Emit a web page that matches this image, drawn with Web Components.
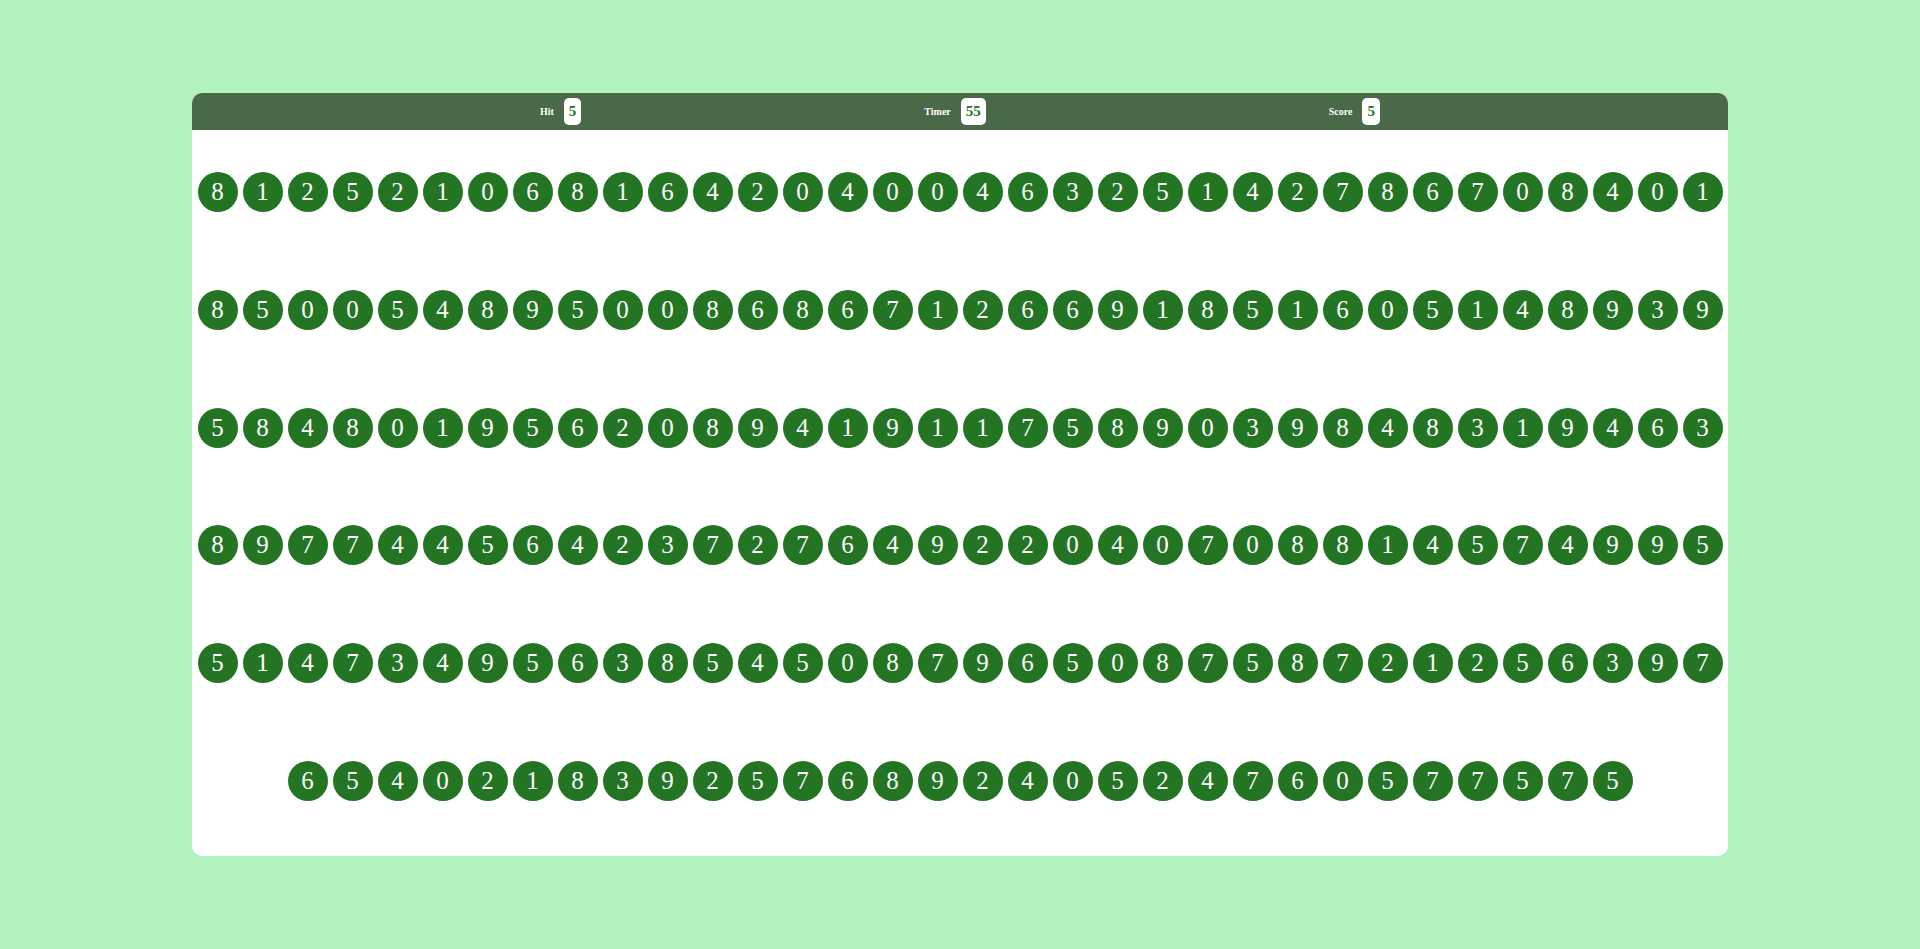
<!DOCTYPE html>
<html lang="en">
<head>
<meta charset="utf-8">
<title>Bubble Game</title>
<style>
body { margin: 0; font-family: "Liberation Serif", "Times New Roman", serif; }
</style>
</head>
<body>
<bubble-game>
  <score-bar slot="bar">
    <stat-box label="Hit">5</stat-box>
    <stat-box label="Timer">55</stat-box>
    <stat-box label="Score">5</stat-box>
  </score-bar>
  <bubble-board digits="
    8125210681642040046325142786708401
    8500548950086867126691851605148939
    5848019562089419117589039848319463
    8977445642372764922040708814574995
    5147349563854508796508758721256397
    654021839257689240524760577575"></bubble-board>
</bubble-game>
<script>
class StatBox extends HTMLElement {
  connectedCallback() {
    this.attachShadow({ mode: "open" }).innerHTML = `
      <style>
        :host { display: flex; align-items: center; gap: 10px; font-weight: bold; color: #fff; font-size: 10px; }
        .value { padding: 5px; border-radius: 5px; background: #fff; color: #237423; font-size: 15px; line-height: 17px; }
      </style>
      <span>${this.getAttribute("label")}</span>
      <span class="value"><slot></slot></span>`;
  }
}
customElements.define("stat-box", StatBox);

class ScoreBar extends HTMLElement {
  constructor() {
    super();
    this.attachShadow({ mode: "open" }).innerHTML = `
      <style>
        :host { display: flex; justify-content: space-evenly; align-items: center; padding: 5px; background: #4a6948; }
      </style>
      <slot></slot>`;
  }
}
customElements.define("score-bar", ScoreBar);

class BubbleBoard extends HTMLElement {
  connectedCallback() {
    const digits = this.getAttribute("digits").replace(/\s/g, "");
    this.attachShadow({ mode: "open" }).innerHTML = `
      <style>
        :host { display: flex; flex-wrap: wrap; justify-content: center; align-content: space-between; gap: 5px; padding: 42px 5px 55px; }
        button { width: 40px; height: 40px; padding: 0; border: 0; border-radius: 50%; background: #237423; color: #fff; font: inherit; font-size: 25px; line-height: 40px; cursor: pointer; }
        button:hover { background: #4a6948; }
      </style>
      ${[...digits].map(d => `<button type="button">${d}</button>`).join("")}`;
  }
}
customElements.define("bubble-board", BubbleBoard);

class BubbleGame extends HTMLElement {
  constructor() {
    super();
    this.attachShadow({ mode: "open" }).innerHTML = `
      <style>
        :host { display: flex; box-sizing: border-box; min-height: 100vh; padding: 93px 10%; background: #b2f3c0; }
        main { flex: 1; display: flex; flex-direction: column; overflow: hidden; border-radius: 10px; background: #fff; }
        ::slotted(bubble-board) { flex: 1; }
      </style>
      <main><slot name="bar"></slot><slot></slot></main>`;
  }
}
customElements.define("bubble-game", BubbleGame);
</script>
</body>
</html>
